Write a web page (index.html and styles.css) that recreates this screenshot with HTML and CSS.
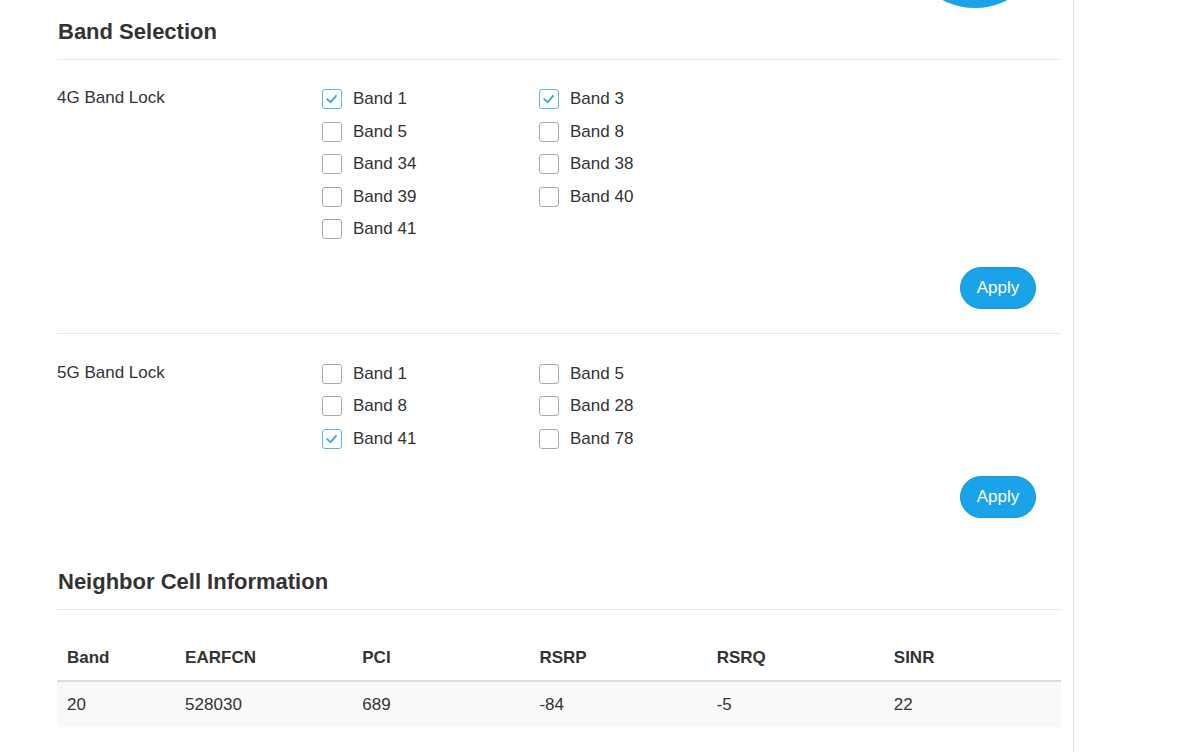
FILE: index.html
```html
<!DOCTYPE html>
<html>
<head>
	<title>Band Selection</title>
	<meta charset="utf-8">
	<link rel="stylesheet" href="styles.css">
</head>
<body>
	<div class="page">
		<div class="float-btn"></div>

		<h2 class="section-title">Band Selection</h2>

		<div class="lock-group">
			<div class="lock-row">
				<div class="lock-label">4G Band Lock</div>
				<div class="band-grid">
					<label class="band"><span class="box checked"><svg viewBox="0 0 20 20"><polyline points="4,9.5 8.5,13.5 15,6"/></svg></span>Band 1</label>
					<label class="band"><span class="box checked"><svg viewBox="0 0 20 20"><polyline points="4,9.5 8.5,13.5 15,6"/></svg></span>Band 3</label>
					<label class="band"><span class="box"></span>Band 5</label>
					<label class="band"><span class="box"></span>Band 8</label>
					<label class="band"><span class="box"></span>Band 34</label>
					<label class="band"><span class="box"></span>Band 38</label>
					<label class="band"><span class="box"></span>Band 39</label>
					<label class="band"><span class="box"></span>Band 40</label>
					<label class="band"><span class="box"></span>Band 41</label>
				</div>
			</div>
			<div class="actions"><button class="apply-btn">Apply</button></div>
		</div>

		<div class="lock-group last">
			<div class="lock-row">
				<div class="lock-label">5G Band Lock</div>
				<div class="band-grid">
					<label class="band"><span class="box"></span>Band 1</label>
					<label class="band"><span class="box"></span>Band 5</label>
					<label class="band"><span class="box"></span>Band 8</label>
					<label class="band"><span class="box"></span>Band 28</label>
					<label class="band"><span class="box checked"><svg viewBox="0 0 20 20"><polyline points="4,9.5 8.5,13.5 15,6"/></svg></span>Band 41</label>
					<label class="band"><span class="box"></span>Band 78</label>
				</div>
			</div>
			<div class="actions"><button class="apply-btn">Apply</button></div>
		</div>

		<h2 class="section-title">Neighbor Cell Information</h2>

		<table class="cell-table">
			<thead>
				<tr>
					<th class="col-first">Band</th>
					<th>EARFCN</th>
					<th>PCI</th>
					<th>RSRP</th>
					<th>RSRQ</th>
					<th>SINR</th>
				</tr>
			</thead>
			<tbody>
				<tr>
					<td>20</td>
					<td>528030</td>
					<td>689</td>
					<td>-84</td>
					<td>-5</td>
					<td>22</td>
				</tr>
			</tbody>
		</table>
	</div>
</body>
</html>
```

FILE: styles.css
```css
*{
	padding: 0;
	margin: 0;
	box-sizing: border-box;
}
html, body{
	background: #fff;
	overflow: hidden;
}
body{
	font-family: "Liberation Sans", Arial, sans-serif;
	font-size: 17px;
	color: #333;
}
.page{
	position: relative;
	width: 1074px;
	min-height: 752px;
	padding: 0 12px 0 57px;
	border-right: 1px solid #ddd;
}
.float-btn{
	position: absolute;
	left: 905px;
	top: -132px;
	width: 140px;
	height: 140px;
	border-radius: 50%;
	background: #1ba3ea;
}
.section-title{
	font-size: 22px;
	line-height: 24px;
	font-weight: bold;
	padding: 20px 0 15px 1px;
	border-bottom: 1px solid #e8e8e8;
}
.lock-group{
	padding: 23px 0 24px;
	border-bottom: 1px solid #e8e8e8;
}
.lock-group.last{
	padding-top: 24px;
	border-bottom: none;
	padding-bottom: 32px;
}
.lock-row{
	display: flex;
}
.lock-label{
	width: 265px;
	line-height: 29px;
}
.band-grid{
	display: grid;
	grid-template-columns: 217px 200px;
	grid-auto-rows: 32.5px;
}
.band{
	display: flex;
	align-items: center;
	gap: 11px;
}
.box{
	width: 20px;
	height: 20px;
	border: 1px solid #a9a9a9;
	border-radius: 3px;
	background: #fff;
	display: inline-block;
}
.box svg{
	display: block;
	width: 18px;
	height: 18px;
}
.box svg polyline{
	fill: none;
	stroke: #3aa6e2;
	stroke-width: 2;
}
.box.checked{
	border-color: #5ab7ea;
	border-width: 1.5px;
}
.actions{
	display: flex;
	justify-content: flex-end;
	margin-top: 21px;
	padding-right: 25px;
}
.apply-btn{
	width: 76px;
	height: 42px;
	border: 1px solid #1897dc;
	border-radius: 21px;
	background: #1ba3ea;
	color: #fff;
	font-family: "Liberation Sans", Arial, sans-serif;
	font-size: 17px;
}
.cell-table{
	margin-top: 26px;
	width: 1004px;
	border-collapse: collapse;
	table-layout: fixed;
}
.cell-table th, .cell-table td{
	text-align: left;
	height: 45px;
	padding: 0 10px;
	width: 177px;
}
.cell-table th.col-first{
	width: 118px;
}
.cell-table thead th{
	font-weight: bold;
	border-bottom: 2px solid #ddd;
}
.cell-table tbody td{
	height: 46px;
	background: #f9f9f9;
}
```
